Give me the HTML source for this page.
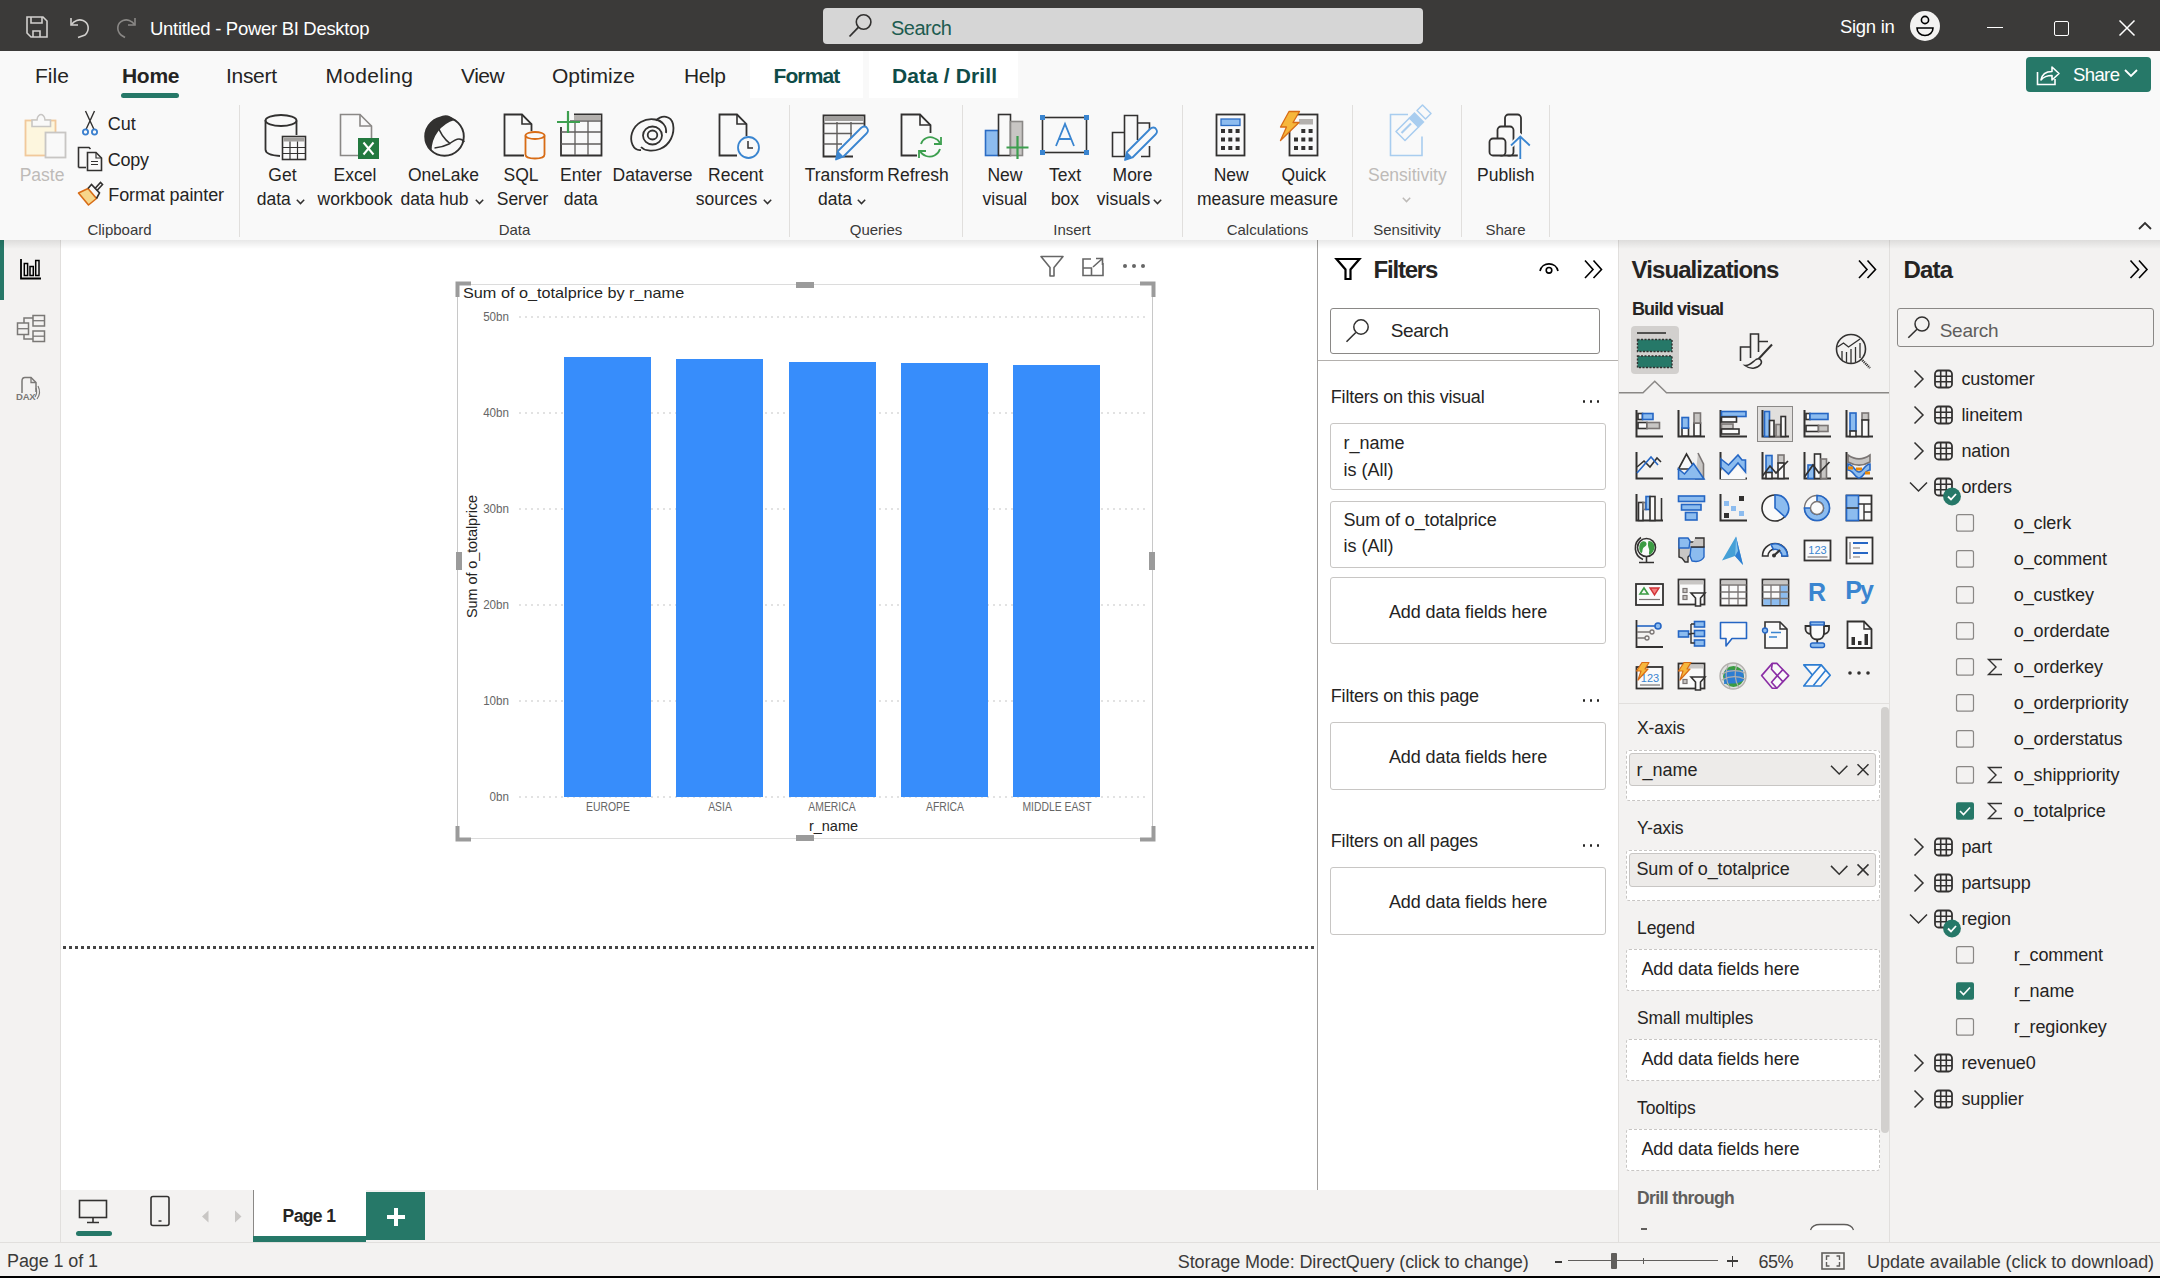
<!DOCTYPE html>
<html><head><meta charset="utf-8">
<style>
*{box-sizing:border-box;margin:0;padding:0}
html,body{width:2160px;height:1278px;overflow:hidden;background:#fff;font-family:"Liberation Sans",sans-serif;color:#252423}
.a{position:absolute;white-space:nowrap}
svg{position:absolute;overflow:visible}
</style></head><body>
<div class="a" style="left:0px;top:0px;width:2160px;height:51px;background:#3b3a39"></div>
<div class="a" style="left:0px;top:51px;width:2160px;height:189px;background:#f9f9f9"></div>
<div class="a" style="left:0px;top:240px;width:61px;height:1002px;background:#f3f2f1"></div>
<div class="a" style="left:60px;top:240px;width:1px;height:1002px;background:#e1dfdd"></div>
<div class="a" style="left:0px;top:240px;width:4px;height:60px;background:#267868"></div>
<div class="a" style="left:61px;top:240px;width:1256px;height:950px;background:#fff"></div>
<div class="a" style="left:61px;top:1190px;width:1557px;height:52px;background:#f3f2f1"></div>
<div class="a" style="left:0px;top:1242px;width:2160px;height:36px;background:#f3f2f1"></div>
<div class="a" style="left:0px;top:1242px;width:2160px;height:1px;background:#e1dfdd"></div>
<div class="a" style="left:0px;top:1276px;width:2160px;height:2px;background:#000"></div>
<div class="a" style="left:1317px;top:240px;width:1px;height:950px;background:#a19f9d"></div>
<div class="a" style="left:1318px;top:240px;width:300px;height:950px;background:#fff"></div>
<div class="a" style="left:1618px;top:240px;width:1px;height:1002px;background:#e1dfdd"></div>
<div class="a" style="left:1619px;top:240px;width:270px;height:1002px;background:#f3f2f1"></div>
<div class="a" style="left:1889px;top:240px;width:1px;height:1002px;background:#e1dfdd"></div>
<div class="a" style="left:1890px;top:240px;width:270px;height:1002px;background:#f3f2f1"></div>
<div class="a" style="left:0px;top:240px;width:2160px;height:9px;background:linear-gradient(rgba(0,0,0,0.09),rgba(0,0,0,0))"></div>
<svg style="left:26px;top:16px;" width="22" height="22" viewBox="0 0 22 22"><path d="M1 1H17L21 5V21H5L1 17Z" fill="none" stroke="#d2d0ce" stroke-width="1.6"/><path d="M5 1V7H16V1" fill="none" stroke="#d2d0ce" stroke-width="1.6"/><path d="M7 21V15H14V21" fill="none" stroke="#d2d0ce" stroke-width="1.6"/></svg>
<svg style="left:70px;top:16px;" width="22" height="22" viewBox="0 0 22 22"><path d="M1 2V9H8" fill="none" stroke="#d2d0ce" stroke-width="1.6"/><path d="M1.5 8.5C4 4.5 9 3 13 4.5C19 7 20 14 15 19L8 21.5" fill="none" stroke="#d2d0ce" stroke-width="1.6"/></svg>
<svg style="left:114px;top:16px;" width="22" height="22" viewBox="0 0 22 22"><path d="M21 2V9H14" fill="none" stroke="#8a8886" stroke-width="1.6"/><path d="M20.5 8.5C18 4.5 13 3 9 4.5C3 7 2 14 7 19L11 21.5" fill="none" stroke="#8a8886" stroke-width="1.6"/></svg>
<div class="a" style="top:20.14px;font-size:18.5px;line-height:18.5px;color:#ffffff;letter-spacing:-0.3px;left:150px;">Untitled - Power BI Desktop</div>
<div class="a" style="left:823px;top:8px;width:600px;height:35.5px;background:#d6d6d6;border-radius:4px"></div>
<svg style="left:839px;top:14px;" width="30" height="26" viewBox="0 0 30 26"><circle cx="24.6" cy="8" r="7.3" fill="none" stroke="#323130" stroke-width="1.6"/><path d="M19.3 13.3L10.5 22.5" stroke="#323130" stroke-width="1.8"/></svg>
<div class="a" style="top:18.27px;font-size:20px;line-height:20px;color:#1e5c50;letter-spacing:-0.5px;left:891px;">Search</div>
<div class="a" style="top:17.74px;font-size:18.5px;line-height:18.5px;color:#ffffff;letter-spacing:-0.3px;left:1840px;">Sign in</div>
<svg style="left:1910px;top:11px;" width="30" height="30" viewBox="0 0 30 30"><circle cx="15" cy="15" r="15" fill="#f3f2f1"/><circle cx="15" cy="9" r="3.6" fill="none" stroke="#000" stroke-width="1.6"/><path d="M7 17H23C23 21.5 19.5 24.5 15 24.5C10.5 24.5 7 21.5 7 17Z" fill="none" stroke="#000" stroke-width="1.6"/></svg>
<div class="a" style="left:1987px;top:26.5px;width:16px;height:1.5px;background:#fff"></div>
<div class="a" style="left:2053.5px;top:20.5px;width:15px;height:15px;border:1.5px solid #fff;border-radius:2px"></div>
<svg style="left:2119px;top:20px;" width="16" height="16" viewBox="0 0 16 16"><path d="M0.5 0.5L15.5 15.5M15.5 0.5L0.5 15.5" stroke="#fff" stroke-width="1.5"/></svg>
<div class="a" style="top:65.32px;font-size:21px;line-height:21px;color:#252423;left:35px;">File</div>
<div class="a" style="top:65.32px;font-size:21px;line-height:21px;color:#252423;font-weight:700;letter-spacing:-0.3px;left:122px;">Home</div>
<div class="a" style="left:121px;top:93px;width:58px;height:5px;background:#267868;border-radius:2.5px"></div>
<div class="a" style="top:65.32px;font-size:21px;line-height:21px;color:#252423;letter-spacing:-0.3px;left:226px;">Insert</div>
<div class="a" style="top:65.32px;font-size:21px;line-height:21px;color:#252423;letter-spacing:0.3px;left:325.5px;">Modeling</div>
<div class="a" style="top:65.32px;font-size:21px;line-height:21px;color:#252423;letter-spacing:-0.5px;left:461px;">View</div>
<div class="a" style="top:65.32px;font-size:21px;line-height:21px;color:#252423;left:552px;">Optimize</div>
<div class="a" style="top:65.32px;font-size:21px;line-height:21px;color:#252423;letter-spacing:-0.4px;left:684px;">Help</div>
<div class="a" style="left:750px;top:51px;width:113px;height:47px;background:#fff"></div>
<div class="a" style="left:869px;top:51px;width:149px;height:47px;background:#fff"></div>
<div class="a" style="top:65.32px;font-size:21px;line-height:21px;color:#0f4c48;font-weight:700;letter-spacing:-0.9px;left:773.5px;">Format</div>
<div class="a" style="top:65.32px;font-size:21px;line-height:21px;color:#0f4c48;font-weight:700;letter-spacing:0.1px;left:892px;">Data / Drill</div>
<div class="a" style="left:2026px;top:57px;width:125px;height:35px;background:#267868;border-radius:4px"></div>
<svg style="left:2036px;top:63px;" width="26" height="23" viewBox="0 0 26 23"><path d="M1.5 9V21.5H19V16" fill="none" stroke="#fff" stroke-width="1.6"/><path d="M5 17C6 11 10 8.5 16 8.5V4L23 10.5L16 17V12.5C11 12.5 7.5 14 5 17Z" fill="none" stroke="#fff" stroke-width="1.6" stroke-linejoin="round"/></svg>
<div class="a" style="top:66.34px;font-size:18.5px;line-height:18.5px;color:#fff;letter-spacing:-0.6px;left:2073px;">Share</div>
<svg style="left:2124px;top:69px;" width="14" height="9" viewBox="0 0 14 9"><path d="M1 1L7 7L13 1" fill="none" stroke="#fff" stroke-width="1.8"/></svg>
<div class="a" style="left:239px;top:105px;width:1px;height:132px;background:#e1dfdd"></div>
<div class="a" style="left:789px;top:105px;width:1px;height:132px;background:#e1dfdd"></div>
<div class="a" style="left:962px;top:105px;width:1px;height:132px;background:#e1dfdd"></div>
<div class="a" style="left:1182px;top:105px;width:1px;height:132px;background:#e1dfdd"></div>
<div class="a" style="left:1352px;top:105px;width:1px;height:132px;background:#e1dfdd"></div>
<div class="a" style="left:1461px;top:105px;width:1px;height:132px;background:#e1dfdd"></div>
<div class="a" style="left:1549px;top:105px;width:1px;height:132px;background:#e1dfdd"></div>
<div class="a" style="top:166.99px;font-size:17.5px;line-height:17.5px;color:#bebbb8;left:-58.00px;width:200px;text-align:center;">Paste</div>
<div class="a" style="top:114.76px;font-size:18px;line-height:18px;color:#252423;left:107.8px;">Cut</div>
<div class="a" style="top:150.76px;font-size:18px;line-height:18px;color:#252423;letter-spacing:-0.3px;left:107.8px;">Copy</div>
<div class="a" style="top:186.46px;font-size:18px;line-height:18px;color:#252423;letter-spacing:-0.1px;left:108.3px;">Format painter</div>
<div class="a" style="top:221.80px;font-size:15px;line-height:15px;color:#3b3a39;left:19.50px;width:200px;text-align:center;">Clipboard</div>
<div class="a" style="top:166.99px;font-size:17.5px;line-height:17.5px;color:#252423;left:182.40px;width:200px;text-align:center;">Get</div>
<div class="a" style="top:190.79px;font-size:17.5px;line-height:17.5px;color:#252423;left:173.75px;width:200px;text-align:center;">data</div>
<svg style="left:295.5px;top:198.5px;" width="9" height="6" viewBox="0 0 9 6"><path d="M0.8 0.8L4.5 4.6L8.2 0.8" fill="none" stroke="#323130" stroke-width="1.5"/></svg>
<div class="a" style="top:166.99px;font-size:17.5px;line-height:17.5px;color:#252423;left:255.00px;width:200px;text-align:center;">Excel</div>
<div class="a" style="top:190.79px;font-size:17.5px;line-height:17.5px;color:#252423;left:255.00px;width:200px;text-align:center;">workbook</div>
<div class="a" style="top:166.99px;font-size:17.5px;line-height:17.5px;color:#252423;left:343.50px;width:200px;text-align:center;">OneLake</div>
<div class="a" style="top:190.79px;font-size:17.5px;line-height:17.5px;color:#252423;left:334.50px;width:200px;text-align:center;">data hub</div>
<svg style="left:475px;top:198.5px;" width="9" height="6" viewBox="0 0 9 6"><path d="M0.8 0.8L4.5 4.6L8.2 0.8" fill="none" stroke="#323130" stroke-width="1.5"/></svg>
<div class="a" style="top:166.99px;font-size:17.5px;line-height:17.5px;color:#252423;left:421.00px;width:200px;text-align:center;">SQL</div>
<div class="a" style="top:190.79px;font-size:17.5px;line-height:17.5px;color:#252423;left:422.50px;width:200px;text-align:center;">Server</div>
<div class="a" style="top:166.99px;font-size:17.5px;line-height:17.5px;color:#252423;left:481.00px;width:200px;text-align:center;">Enter</div>
<div class="a" style="top:190.79px;font-size:17.5px;line-height:17.5px;color:#252423;left:480.75px;width:200px;text-align:center;">data</div>
<div class="a" style="top:166.99px;font-size:17.5px;line-height:17.5px;color:#252423;left:552.50px;width:200px;text-align:center;">Dataverse</div>
<div class="a" style="top:166.99px;font-size:17.5px;line-height:17.5px;color:#252423;left:635.75px;width:200px;text-align:center;">Recent</div>
<div class="a" style="top:190.79px;font-size:17.5px;line-height:17.5px;color:#252423;left:626.50px;width:200px;text-align:center;">sources</div>
<svg style="left:762.5px;top:198.5px;" width="9" height="6" viewBox="0 0 9 6"><path d="M0.8 0.8L4.5 4.6L8.2 0.8" fill="none" stroke="#323130" stroke-width="1.5"/></svg>
<div class="a" style="top:221.80px;font-size:15px;line-height:15px;color:#3b3a39;left:414.50px;width:200px;text-align:center;">Data</div>
<div class="a" style="top:166.99px;font-size:17.5px;line-height:17.5px;color:#252423;left:744.20px;width:200px;text-align:center;">Transform</div>
<div class="a" style="top:190.79px;font-size:17.5px;line-height:17.5px;color:#252423;left:735.00px;width:200px;text-align:center;">data</div>
<svg style="left:857px;top:199px;" width="9" height="6" viewBox="0 0 9 6"><path d="M0.8 0.8L4.5 4.6L8.2 0.8" fill="none" stroke="#323130" stroke-width="1.5"/></svg>
<div class="a" style="top:166.99px;font-size:17.5px;line-height:17.5px;color:#252423;left:818.00px;width:200px;text-align:center;">Refresh</div>
<div class="a" style="top:221.80px;font-size:15px;line-height:15px;color:#3b3a39;left:776.00px;width:200px;text-align:center;">Queries</div>
<div class="a" style="top:166.99px;font-size:17.5px;line-height:17.5px;color:#252423;left:905.00px;width:200px;text-align:center;">New</div>
<div class="a" style="top:190.79px;font-size:17.5px;line-height:17.5px;color:#252423;left:904.90px;width:200px;text-align:center;">visual</div>
<div class="a" style="top:166.99px;font-size:17.5px;line-height:17.5px;color:#252423;left:965.00px;width:200px;text-align:center;">Text</div>
<div class="a" style="top:190.79px;font-size:17.5px;line-height:17.5px;color:#252423;left:965.00px;width:200px;text-align:center;">box</div>
<div class="a" style="top:166.99px;font-size:17.5px;line-height:17.5px;color:#252423;left:1032.50px;width:200px;text-align:center;">More</div>
<div class="a" style="top:190.79px;font-size:17.5px;line-height:17.5px;color:#252423;left:1023.50px;width:200px;text-align:center;">visuals</div>
<svg style="left:1153px;top:199px;" width="9" height="6" viewBox="0 0 9 6"><path d="M0.8 0.8L4.5 4.6L8.2 0.8" fill="none" stroke="#323130" stroke-width="1.5"/></svg>
<div class="a" style="top:221.80px;font-size:15px;line-height:15px;color:#3b3a39;left:972.00px;width:200px;text-align:center;">Insert</div>
<div class="a" style="top:166.99px;font-size:17.5px;line-height:17.5px;color:#252423;left:1131.25px;width:200px;text-align:center;">New</div>
<div class="a" style="top:190.79px;font-size:17.5px;line-height:17.5px;color:#252423;left:1131.00px;width:200px;text-align:center;">measure</div>
<div class="a" style="top:166.99px;font-size:17.5px;line-height:17.5px;color:#252423;left:1203.75px;width:200px;text-align:center;">Quick</div>
<div class="a" style="top:190.79px;font-size:17.5px;line-height:17.5px;color:#252423;left:1203.85px;width:200px;text-align:center;">measure</div>
<div class="a" style="top:221.80px;font-size:15px;line-height:15px;color:#3b3a39;left:1167.50px;width:200px;text-align:center;">Calculations</div>
<div class="a" style="top:166.99px;font-size:17.5px;line-height:17.5px;color:#bebbb8;left:1307.35px;width:200px;text-align:center;">Sensitivity</div>
<svg style="left:1402px;top:196.5px;" width="9" height="6" viewBox="0 0 9 6"><path d="M0.8 0.8L4.5 4.6L8.2 0.8" fill="none" stroke="#bebbb8" stroke-width="1.5"/></svg>
<div class="a" style="top:221.80px;font-size:15px;line-height:15px;color:#3b3a39;left:1307.00px;width:200px;text-align:center;">Sensitivity</div>
<div class="a" style="top:166.99px;font-size:17.5px;line-height:17.5px;color:#252423;left:1405.75px;width:200px;text-align:center;">Publish</div>
<div class="a" style="top:221.80px;font-size:15px;line-height:15px;color:#3b3a39;left:1405.50px;width:200px;text-align:center;">Share</div>
<svg style="left:2138px;top:221px;" width="14" height="9" viewBox="0 0 14 9"><path d="M1 8L7 2L13 8" fill="none" stroke="#323130" stroke-width="1.8"/></svg>
<svg style="left:0px;top:0px;" width="2160" height="1278" viewBox="0 0 2160 1278"><rect x="25.5" y="120.5" width="30" height="35" fill="#fdf6de" stroke="#f1c99b" stroke-width="1.8"/><path d="M32 126.5V120H37C37 116 40 114.5 41 114.5C42 114.5 45 116 45 120H50.5V126.5Z" fill="#f9f9f9" stroke="#c8c6c4" stroke-width="1.6"/><rect x="45.5" y="132.5" width="20" height="25" fill="#f9f9f9" stroke="#c8c6c4" stroke-width="1.8"/><path d="M85.5 111L94 129.5M94.5 111L86 129.5" stroke="#323130" stroke-width="1.4"/><circle cx="85.5" cy="132" r="2.6" fill="none" stroke="#3a7fcf" stroke-width="1.8"/><circle cx="94.5" cy="132" r="2.6" fill="none" stroke="#3a7fcf" stroke-width="1.8"/><path d="M78.5 167.5V147.5H89L90.5 149" fill="none" stroke="#323130" stroke-width="1.6"/><path d="M78.5 167.5H86" stroke="#323130" stroke-width="1.6"/><path d="M87.5 152.5H96L101.5 158V170.5H87.5Z" fill="none" stroke="#323130" stroke-width="1.6"/><path d="M96 152.5V158H101.5M91 161.5H98M91 164.5H98" fill="none" stroke="#323130" stroke-width="1.2"/><path d="M78.5 193L88 188.5L96.5 198.5L88.5 205Z" fill="#f7d68a" stroke="#d86c16" stroke-width="1.6" stroke-linejoin="round"/><path d="M88 188.5L91.5 184.5L99.5 193L96.5 198.5" fill="none" stroke="#323130" stroke-width="1.6"/><path d="M95 188.5L100.5 182.5L102.5 184.5L97 190.5" fill="none" stroke="#323130" stroke-width="1.6"/><path d="M265.5 120V149.5C265.5 153 271 155.5 280 156" fill="none" stroke="#323130" stroke-width="1.8"/><ellipse cx="281" cy="120.5" rx="15.5" ry="5.5" fill="none" stroke="#323130" stroke-width="1.8"/><path d="M296.5 120.5V135" stroke="#323130" stroke-width="1.8"/><rect x="282.5" y="136.5" width="23" height="23" fill="#f9f9f9" stroke="#323130" stroke-width="1.6"/><rect x="283.5" y="137.5" width="21" height="4" fill="#a19f9d"/><path d="M290 141.5V159M297.5 141.5V159M283 147.5H305M283 153.5H305" stroke="#323130" stroke-width="1.2"/><path d="M358 155.5H340.5V114.5H360L371.5 126V138" fill="none" stroke="#8a8886" stroke-width="1.6"/><path d="M360 114.5V126H371.5" fill="none" stroke="#8a8886" stroke-width="1.6"/><rect x="358" y="138" width="21" height="21" fill="#22793f"/><path d="M363.5 142.5L373.5 154.5M373.5 142.5L363.5 154.5" stroke="#fff" stroke-width="2"/><circle cx="444.5" cy="136.5" r="19.3" fill="none" stroke="#323130" stroke-width="1.9"/><path d="M431.6 150.8A19.3 19.3 0 0 1 454.7 120.1A32 32 0 0 0 431.6 150.8Z" fill="#323130"/><path d="M440 117.5C443 114 450 114 454.7 120.1L447 119Z" fill="#323130"/><path d="M437.5 124.5C439.5 132 444 139 450.5 144M434.5 148C440 147.5 445 146 449 144C453 141 456 139 459 139C461.5 139 463 140 464.3 142" fill="none" stroke="#323130" stroke-width="1.5"/><path d="M641 150C633 151 629.5 141 632 133C635 123 645 118 655 119.5C662 120.5 667 126 666 133" fill="none" stroke="#323130" stroke-width="1.8"/><path d="M656 120.5C662 114.5 671 115.5 673 124C675 134 670 145 660 149C652 152 644 150.5 641 147" fill="none" stroke="#323130" stroke-width="1.8"/><ellipse cx="652.5" cy="135.5" rx="9.5" ry="9" fill="none" stroke="#323130" stroke-width="1.8"/><ellipse cx="652.5" cy="135" rx="4.8" ry="4.5" fill="none" stroke="#323130" stroke-width="1.8"/><path d="M524 155.5H504.5V114.5H522L531.5 124V131" fill="none" stroke="#323130" stroke-width="1.8"/><path d="M522 114.5V124H531.5" fill="none" stroke="#323130" stroke-width="1.6"/><path d="M525.5 135.5V154.5C525.5 157 529.5 158.5 535 158.5C540.5 158.5 544.5 157 544.5 154.5V135.5" fill="#f9f9f9" stroke="#d86c16" stroke-width="1.8"/><ellipse cx="535" cy="135.5" rx="9.5" ry="3.5" fill="#f9f9f9" stroke="#d86c16" stroke-width="1.8"/><path d="M561 127V155.5H601.5V114.5H574" fill="none" stroke="#323130" stroke-width="1.8"/><rect x="574" y="115" width="27" height="5" fill="#b3b0ad"/><path d="M570 121H601M561 132H601M561 144H601M575 121V155M588 121V155" stroke="#605e5c" stroke-width="1.3"/><path d="M568 111V133M557 122H580" stroke="#3d9f4f" stroke-width="2.2"/><path d="M737 155.5H719.5V114.5H737L746.5 124V136" fill="none" stroke="#323130" stroke-width="1.8"/><path d="M737 114.5V124H746.5" fill="none" stroke="#323130" stroke-width="1.6"/><circle cx="748.5" cy="147.5" r="10.5" fill="#f9f9f9" stroke="#3a85d0" stroke-width="1.8"/><path d="M748 141V148H753" fill="none" stroke="#323130" stroke-width="1.5"/><path d="M853 156.5H823.5V115.5H864.5V129" fill="none" stroke="#323130" stroke-width="1.8"/><rect x="824.5" y="116" width="39" height="5" fill="#a19f9d"/><path d="M823.5 123.5H864M823.5 133.5H852M823.5 144H842M837 122V156M851 122V139" stroke="#605e5c" stroke-width="1.4"/><path d="M836 159.5L838 151L861 128C863 126 866 126 867 128C868.5 130 868 132 866.5 133.5L843.5 156.5Z" fill="#f9f9f9" stroke="#3a85d0" stroke-width="1.8" stroke-linejoin="round"/><path d="M836 159.5L838 151L843.5 156.5Z" fill="#3a85d0"/><path d="M917 155.5H901.5V114.5H920L930.5 125V133" fill="none" stroke="#323130" stroke-width="1.8"/><path d="M920 114.5V125H930.5" fill="none" stroke="#323130" stroke-width="1.6"/><path d="M921 144C923 138 929 136 934 138C937 139 939 141 940 143M940 149C938 155 932 158 926 156C923 155 921 153 920 151" fill="none" stroke="#3d9f4f" stroke-width="1.8"/><path d="M941 137V144H934M919 158V151H926" fill="none" stroke="#3d9f4f" stroke-width="1.8"/><rect x="985.5" y="130.5" width="13" height="25" fill="#8dbcef" stroke="#2b6cc4" stroke-width="1.6"/><rect x="998.5" y="114.5" width="12" height="41" fill="#f9f9f9" stroke="#323130" stroke-width="1.6"/><rect x="1010.5" y="121.5" width="12" height="34" fill="#c8c6c4" stroke="#8a8886" stroke-width="1.6"/><path d="M1017.5 136V159M1006.5 147.5H1028.5" stroke="#3d9f4f" stroke-width="2.2"/><rect x="1042.5" y="117.5" width="44" height="35" fill="none" stroke="#323130" stroke-width="1.6"/><rect x="1040.0" y="115.0" width="5" height="5" fill="#3a85d0"/><rect x="1084.0" y="115.0" width="5" height="5" fill="#3a85d0"/><rect x="1040.0" y="150.0" width="5" height="5" fill="#3a85d0"/><rect x="1084.0" y="150.0" width="5" height="5" fill="#3a85d0"/><path d="M1056 146L1065 124L1074 146M1059 139H1071" fill="none" stroke="#3a85d0" stroke-width="1.8"/><path d="M1125 156.5H1112.5V132.5H1124.5V156.5M1124.5 132.5V115.5H1137.5V140M1137.5 123H1149.5V131M1141 156.5H1149.5V146" fill="none" stroke="#323130" stroke-width="1.6"/><path d="M1125 160L1127 152L1150 129C1152 127 1155 127 1156 129C1157.5 131 1157 133 1155.5 134.5L1132.5 157.5Z" fill="#f9f9f9" stroke="#3a85d0" stroke-width="1.8" stroke-linejoin="round"/><path d="M1125 160L1127 152L1132.5 157.5Z" fill="#3a85d0"/><rect x="1216.5" y="114.5" width="28" height="41" fill="#f9f9f9" stroke="#323130" stroke-width="1.8"/><rect x="1221" y="119" width="19" height="6.5" fill="#8dbcef" stroke="#2b6cc4" stroke-width="1.3"/><rect x="1221.0" y="129.0" width="4" height="4" fill="#323130"/><rect x="1228.3" y="129.0" width="4" height="4" fill="#323130"/><rect x="1235.6" y="129.0" width="4" height="4" fill="#323130"/><rect x="1221.0" y="137.5" width="4" height="4" fill="#323130"/><rect x="1228.3" y="137.5" width="4" height="4" fill="#323130"/><rect x="1235.6" y="137.5" width="4" height="4" fill="#323130"/><rect x="1221.0" y="146.0" width="4" height="4" fill="#323130"/><rect x="1228.3" y="146.0" width="4" height="4" fill="#323130"/><rect x="1235.6" y="146.0" width="4" height="4" fill="#323130"/><rect x="1289.5" y="114.5" width="28" height="41" fill="#f9f9f9" stroke="#323130" stroke-width="1.8"/><rect x="1299" y="119" width="14" height="5.5" fill="#b3b0ad"/><rect x="1301.3" y="129.0" width="4" height="4" fill="#323130"/><rect x="1308.6" y="129.0" width="4" height="4" fill="#323130"/><rect x="1294.0" y="137.5" width="4" height="4" fill="#323130"/><rect x="1301.3" y="137.5" width="4" height="4" fill="#323130"/><rect x="1308.6" y="137.5" width="4" height="4" fill="#323130"/><rect x="1294.0" y="146.0" width="4" height="4" fill="#323130"/><rect x="1301.3" y="146.0" width="4" height="4" fill="#323130"/><rect x="1308.6" y="146.0" width="4" height="4" fill="#323130"/><path d="M1289 111.5H1299.5L1293 122.5H1299L1280.5 140.5L1286.5 127H1280.5Z" fill="#f6b73c" stroke="#d86c16" stroke-width="1.3" stroke-linejoin="round"/><path d="M1408 114.5H1390.5V155.5H1422V136.5" fill="none" stroke="#a9cdef" stroke-width="1.6"/><path d="M1396 131.5L1409.5 118L1418.5 127L1405 140.5Z" fill="#f9f9f9" stroke="#a9cdef" stroke-width="1.6" stroke-linejoin="round"/><path d="M1401.5 133L1411 123.5" stroke="#a9cdef" stroke-width="2.2"/><path d="M1408.5 118L1414.5 112L1424.5 122L1418.5 128Z" fill="#a9cdef"/><path d="M1417 110.5L1422.5 105L1431 113.5L1425.5 119Z" fill="#f9f9f9" stroke="#a9cdef" stroke-width="1.5" stroke-linejoin="round"/><rect x="1505" y="114.5" width="16" height="41" rx="3.5" fill="#f9f9f9" stroke="#323130" stroke-width="1.8"/><rect x="1497.5" y="126.5" width="16" height="29" rx="3.5" fill="#f9f9f9" stroke="#323130" stroke-width="1.8"/><rect x="1489.5" y="138.5" width="16" height="17" rx="3.5" fill="#f9f9f9" stroke="#323130" stroke-width="1.8"/><path d="M1520.3 159V137M1511 145.5L1520.3 136.5L1529.8 145.5" fill="none" stroke="#f9f9f9" stroke-width="5"/><path d="M1520.3 159V136M1511 145.5L1520.3 136.5L1529.8 145.5" fill="none" stroke="#3a85d0" stroke-width="1.8"/></svg>
<svg style="left:0px;top:0px;" width="2160" height="1278" viewBox="0 0 2160 1278"><path d="M21 259V278.5H41" fill="none" stroke="#000" stroke-width="1.8"/><rect x="24.3" y="263.5" width="3.3" height="12" fill="none" stroke="#000" stroke-width="1.5"/><rect x="30" y="266.5" width="3.3" height="9" fill="none" stroke="#000" stroke-width="1.5"/><rect x="35.7" y="260.5" width="3.3" height="15" fill="none" stroke="#000" stroke-width="1.5"/><rect x="17.5" y="323" width="11" height="11.5" fill="none" stroke="#7a7876" stroke-width="1.5"/><path d="M17.5 328.7H28.5" stroke="#7a7876" stroke-width="1.3"/><rect x="33" y="315.5" width="11.5" height="10.5" fill="none" stroke="#7a7876" stroke-width="1.5"/><path d="M33 320.7H44.5" stroke="#7a7876" stroke-width="1.3"/><rect x="33" y="331" width="11.5" height="10.5" fill="none" stroke="#7a7876" stroke-width="1.5"/><path d="M33 336.2H44.5" stroke="#7a7876" stroke-width="1.3"/><path d="M24 323V318H33M24 334.5V339H33" fill="none" stroke="#7a7876" stroke-width="1.5"/><path d="M22 393V381C22 379 23 377.5 25 377.5H31L36 382.5V392" fill="none" stroke="#7a7876" stroke-width="1.5"/><path d="M31 377.5V382.5H36" fill="none" stroke="#7a7876" stroke-width="1.3"/><path d="M38 386C40 390 40 395 37 399M36 388C37 391 37 394 35 397" fill="none" stroke="#7a7876" stroke-width="1.2"/></svg>
<div class="a" style="top:392.46px;font-size:9.5px;line-height:9.5px;color:#7a7876;font-weight:700;letter-spacing:-0.2px;left:16px;">DAX</div>
<div class="a" style="left:63px;top:946px;width:1252px;height:3px;background-image:linear-gradient(90deg,#444 3px,transparent 3px);background-size:6px 3px"></div>
<div class="a" style="left:457px;top:284px;width:696px;height:555px;border:1.5px solid #dcdcdc"></div>
<div class="a" style="left:457px;top:284px;width:1.3px;height:555px;background:#c8c8c8"></div>
<div class="a" style="left:1151.7px;top:284px;width:1.3px;height:555px;background:#c8c8c8"></div>
<svg style="left:0px;top:0px;" width="2160" height="1278" viewBox="0 0 2160 1278"><path transform="translate(456,282)" d="M1.5 15V1.5H15" fill="none" stroke="#9b9b9b" stroke-width="4"/><path transform="translate(1140,282)" d="M0 1.5H13.5V15" fill="none" stroke="#9b9b9b" stroke-width="4"/><path transform="translate(456,826)" d="M1.5 0V13.5H15" fill="none" stroke="#9b9b9b" stroke-width="4"/><path transform="translate(1140,826)" d="M0 13.5H13.5V0" fill="none" stroke="#9b9b9b" stroke-width="4"/><rect x="796" y="282" width="18" height="6" fill="#9b9b9b"/><rect x="796" y="835" width="18" height="6" fill="#9b9b9b"/><rect x="456" y="552" width="6" height="18" fill="#9b9b9b"/><rect x="1149" y="552" width="6" height="18" fill="#9b9b9b"/></svg>
<svg style="left:0px;top:0px;" width="2160" height="1278" viewBox="0 0 2160 1278"><path d="M1041 256.5H1063L1054 267.5V276H1050V267.5Z" fill="none" stroke="#666" stroke-width="1.6" stroke-linejoin="round"/><path d="M1091 259H1083V275.5H1103V263M1083 268H1091.5V275.5M1093 267L1102.5 258.5M1096 258.5H1102.5V265" fill="none" stroke="#666" stroke-width="1.6"/><circle cx="1125" cy="266" r="2" fill="#666"/><circle cx="1134" cy="266" r="2" fill="#666"/><circle cx="1143" cy="266" r="2" fill="#666"/></svg>
<div class="a" style="top:286.48px;font-size:14.5px;line-height:14.5px;color:#252423;left:462.6px;transform:scaleX(1.12);transform-origin:left center;">Sum of o_totalprice by r_name</div>
<div class="a" style="top:310.62px;font-size:12.5px;line-height:12.5px;color:#666666;left:449.20px;width:60px;text-align:right;transform:scaleX(0.93);transform-origin:right center;">50bn</div>
<div class="a" style="left:519px;top:316px;width:626px;height:2px;background-image:linear-gradient(90deg,#e2e2e2 2px,transparent 2px);background-size:6px 2px"></div>
<div class="a" style="top:406.62px;font-size:12.5px;line-height:12.5px;color:#666666;left:449.20px;width:60px;text-align:right;transform:scaleX(0.93);transform-origin:right center;">40bn</div>
<div class="a" style="left:519px;top:412px;width:626px;height:2px;background-image:linear-gradient(90deg,#e2e2e2 2px,transparent 2px);background-size:6px 2px"></div>
<div class="a" style="top:502.62px;font-size:12.5px;line-height:12.5px;color:#666666;left:449.20px;width:60px;text-align:right;transform:scaleX(0.93);transform-origin:right center;">30bn</div>
<div class="a" style="left:519px;top:508px;width:626px;height:2px;background-image:linear-gradient(90deg,#e2e2e2 2px,transparent 2px);background-size:6px 2px"></div>
<div class="a" style="top:598.62px;font-size:12.5px;line-height:12.5px;color:#666666;left:449.20px;width:60px;text-align:right;transform:scaleX(0.93);transform-origin:right center;">20bn</div>
<div class="a" style="left:519px;top:604px;width:626px;height:2px;background-image:linear-gradient(90deg,#e2e2e2 2px,transparent 2px);background-size:6px 2px"></div>
<div class="a" style="top:694.62px;font-size:12.5px;line-height:12.5px;color:#666666;left:449.20px;width:60px;text-align:right;transform:scaleX(0.93);transform-origin:right center;">10bn</div>
<div class="a" style="left:519px;top:700px;width:626px;height:2px;background-image:linear-gradient(90deg,#e2e2e2 2px,transparent 2px);background-size:6px 2px"></div>
<div class="a" style="top:790.62px;font-size:12.5px;line-height:12.5px;color:#666666;left:449.20px;width:60px;text-align:right;transform:scaleX(0.93);transform-origin:right center;">0bn</div>
<div class="a" style="left:519px;top:796px;width:626px;height:2px;background-image:linear-gradient(90deg,#e2e2e2 2px,transparent 2px);background-size:6px 2px"></div>
<div class="a" style="left:564px;top:357px;width:87px;height:440px;background:#378dfb"></div>
<div class="a" style="left:676.2px;top:359px;width:87px;height:438px;background:#378dfb"></div>
<div class="a" style="left:788.6px;top:362px;width:87px;height:435px;background:#378dfb"></div>
<div class="a" style="left:901px;top:363px;width:87px;height:434px;background:#378dfb"></div>
<div class="a" style="left:1013.4px;top:365.4px;width:87px;height:431.6px;background:#378dfb"></div>
<div class="a" style="top:801.42px;font-size:12.5px;line-height:12.5px;color:#666666;left:527.50px;width:160px;text-align:center;transform:scaleX(0.83);transform-origin:center center;">EUROPE</div>
<div class="a" style="top:801.42px;font-size:12.5px;line-height:12.5px;color:#666666;left:639.70px;width:160px;text-align:center;transform:scaleX(0.83);transform-origin:center center;">ASIA</div>
<div class="a" style="top:801.42px;font-size:12.5px;line-height:12.5px;color:#666666;left:752.10px;width:160px;text-align:center;transform:scaleX(0.83);transform-origin:center center;">AMERICA</div>
<div class="a" style="top:801.42px;font-size:12.5px;line-height:12.5px;color:#666666;left:864.50px;width:160px;text-align:center;transform:scaleX(0.83);transform-origin:center center;">AFRICA</div>
<div class="a" style="top:801.42px;font-size:12.5px;line-height:12.5px;color:#666666;left:976.90px;width:160px;text-align:center;transform:scaleX(0.83);transform-origin:center center;">MIDDLE EAST</div>
<div class="a" style="top:818.73px;font-size:14.5px;line-height:14.5px;color:#252423;left:783.50px;width:100px;text-align:center;">r_name</div>
<div class="a" style="left:411.5px;top:549px;width:120px;height:18px;font-size:14.5px;line-height:18px;text-align:center;color:#252423;transform:rotate(-90deg);letter-spacing:-0.1px">Sum of o_totalprice</div>
<svg style="left:0px;top:0px;" width="2160" height="1278" viewBox="0 0 2160 1278"><rect x="79.5" y="1200.5" width="27" height="17" fill="none" stroke="#323130" stroke-width="1.6"/><path d="M93 1218V1222M87 1222.5H99" stroke="#323130" stroke-width="1.6"/><rect x="151" y="1196.5" width="18" height="29" rx="2" fill="none" stroke="#323130" stroke-width="1.6"/><path d="M158.5 1221H161.5" stroke="#323130" stroke-width="1.5"/><path d="M208.5 1210.5L202 1216.5L208.5 1222.5Z" fill="#c8c6c4"/><path d="M235 1210.5L241.5 1216.5L235 1222.5Z" fill="#c8c6c4"/></svg>
<div class="a" style="left:76px;top:1231px;width:36px;height:5px;background:#267868;border-radius:2.5px"></div>
<div class="a" style="left:252.6px;top:1190px;width:113px;height:52px;background:#fff;border-left:1px solid #8a8886"></div>
<div class="a" style="left:253px;top:1236px;width:113px;height:6px;background:#267868"></div>
<div class="a" style="top:1207.94px;font-size:17.5px;line-height:17.5px;color:#252423;font-weight:700;letter-spacing:-0.6px;left:249.00px;width:120px;text-align:center;">Page 1</div>
<div class="a" style="left:366px;top:1192px;width:59px;height:48px;background:#267868"></div>
<div class="a" style="left:394px;top:1208px;width:4px;height:17.5px;background:#fff"></div>
<div class="a" style="left:387px;top:1214.5px;width:18px;height:4px;background:#fff"></div>
<div class="a" style="top:1252.26px;font-size:18px;line-height:18px;color:#3b3a39;letter-spacing:-0.1px;left:7px;">Page 1 of 1</div>
<div class="a" style="top:1252.56px;font-size:18px;line-height:18px;color:#3b3a39;letter-spacing:-0.1px;left:1177.8px;">Storage Mode: DirectQuery (click to change)</div>
<div class="a" style="left:1555px;top:1260.5px;width:6.5px;height:2px;background:#3b3a39"></div>
<div class="a" style="left:1568px;top:1260px;width:150px;height:1.2px;background:#605e5c"></div>
<div class="a" style="left:1611px;top:1252.5px;width:6px;height:16px;background:#605e5c;border-radius:1px"></div>
<div class="a" style="left:1642.5px;top:1257.5px;width:1.2px;height:6px;background:#605e5c"></div>
<div class="a" style="left:1727px;top:1260.3px;width:11px;height:1.8px;background:#3b3a39"></div>
<div class="a" style="left:1731.6px;top:1255.7px;width:1.8px;height:11px;background:#3b3a39"></div>
<div class="a" style="top:1252.56px;font-size:18px;line-height:18px;color:#3b3a39;letter-spacing:-0.5px;left:1758.5px;">65%</div>
<svg style="left:0px;top:0px;" width="2160" height="1278" viewBox="0 0 2160 1278"><rect x="1822" y="1253" width="22" height="16" fill="none" stroke="#605e5c" stroke-width="1.6"/><path d="M1826.5 1260V1256H1829.5M1836.5 1256H1839.5V1260M1826.5 1262V1266H1829.5M1836.5 1266H1839.5V1262" fill="none" stroke="#605e5c" stroke-width="1.4"/></svg>
<div class="a" style="top:1252.56px;font-size:18px;line-height:18px;color:#3b3a39;letter-spacing:-0.03px;left:1867px;">Update available (click to download)</div>
<svg style="left:0px;top:0px;" width="2160" height="1278" viewBox="0 0 2160 1278"><path d="M1336.5 259H1359.5L1350.5 269.5V279H1345.5V269.5Z" fill="none" stroke="#000" stroke-width="2.2" stroke-linejoin="miter"/><path d="M1540 271C1542 261.5 1556 261.5 1558 271" fill="none" stroke="#000" stroke-width="1.6"/><circle cx="1549" cy="270.3" r="2.8" fill="none" stroke="#000" stroke-width="1.6"/><path d="M1585 260.5L1593 269.5L1585 278M1593.5 260.5L1601.5 269.5L1593.5 278" fill="none" stroke="#000" stroke-width="1.6"/></svg>
<div class="a" style="top:257.98px;font-size:24px;line-height:24px;color:#252423;font-weight:700;letter-spacing:-1.2px;left:1373.5px;">Filters</div>
<div class="a" style="left:1330px;top:308px;width:270px;height:45.5px;border:1px solid #8a8886;border-radius:3px;background:#fff"></div>
<svg style="left:0px;top:0px;" width="2160" height="1278" viewBox="0 0 2160 1278"><circle cx="1361" cy="327" r="7.2" fill="none" stroke="#323130" stroke-width="1.5"/><path d="M1355.8 332.5L1346.5 341.8" stroke="#323130" stroke-width="1.6"/></svg>
<div class="a" style="top:320.62px;font-size:19px;line-height:19px;color:#252423;letter-spacing:-0.45px;left:1390.8px;">Search</div>
<div class="a" style="left:1318px;top:360px;width:300px;height:1.3px;background:#b3b0ad"></div>
<div class="a" style="top:388.36px;font-size:18px;line-height:18px;color:#252423;letter-spacing:-0.2px;left:1330.8px;">Filters on this visual</div>
<div class="a" style="left:1582.5px;top:400.3px;width:2.4px;height:2.4px;background:#252423;border-radius:50%"></div>
<div class="a" style="left:1589.5px;top:400.3px;width:2.4px;height:2.4px;background:#252423;border-radius:50%"></div>
<div class="a" style="left:1596.5px;top:400.3px;width:2.4px;height:2.4px;background:#252423;border-radius:50%"></div>
<div class="a" style="left:1330px;top:423px;width:276px;height:67px;border:1px solid #c8c6c4;border-radius:3px;background:#fff"></div>
<div class="a" style="top:433.76px;font-size:18px;line-height:18px;color:#252423;left:1343.4px;">r_name</div>
<div class="a" style="top:460.76px;font-size:18px;line-height:18px;color:#252423;left:1343.4px;">is (All)</div>
<div class="a" style="left:1330px;top:500.5px;width:276px;height:67px;border:1px solid #c8c6c4;border-radius:3px;background:#fff"></div>
<div class="a" style="top:510.56px;font-size:18px;line-height:18px;color:#252423;letter-spacing:-0.1px;left:1343.4px;">Sum of o_totalprice</div>
<div class="a" style="top:537.36px;font-size:18px;line-height:18px;color:#252423;left:1343.4px;">is (All)</div>
<div class="a" style="left:1330px;top:577px;width:276px;height:67px;border:1px solid #c8c6c4;border-radius:3px;background:#fff"></div>
<div class="a" style="top:602.56px;font-size:18px;line-height:18px;color:#252423;letter-spacing:-0.1px;left:1338.00px;width:260px;text-align:center;">Add data fields here</div>
<div class="a" style="top:687.26px;font-size:18px;line-height:18px;color:#252423;letter-spacing:-0.2px;left:1330.8px;">Filters on this page</div>
<div class="a" style="left:1582.5px;top:699.2px;width:2.4px;height:2.4px;background:#252423;border-radius:50%"></div>
<div class="a" style="left:1589.5px;top:699.2px;width:2.4px;height:2.4px;background:#252423;border-radius:50%"></div>
<div class="a" style="left:1596.5px;top:699.2px;width:2.4px;height:2.4px;background:#252423;border-radius:50%"></div>
<div class="a" style="left:1330px;top:722px;width:276px;height:67.5px;border:1px solid #c8c6c4;border-radius:3px;background:#fff"></div>
<div class="a" style="top:747.76px;font-size:18px;line-height:18px;color:#252423;letter-spacing:-0.1px;left:1338.00px;width:260px;text-align:center;">Add data fields here</div>
<div class="a" style="top:832.26px;font-size:18px;line-height:18px;color:#252423;letter-spacing:-0.2px;left:1330.8px;">Filters on all pages</div>
<div class="a" style="left:1582.5px;top:844.2px;width:2.4px;height:2.4px;background:#252423;border-radius:50%"></div>
<div class="a" style="left:1589.5px;top:844.2px;width:2.4px;height:2.4px;background:#252423;border-radius:50%"></div>
<div class="a" style="left:1596.5px;top:844.2px;width:2.4px;height:2.4px;background:#252423;border-radius:50%"></div>
<div class="a" style="left:1330px;top:867px;width:276px;height:67.5px;border:1px solid #c8c6c4;border-radius:3px;background:#fff"></div>
<div class="a" style="top:892.76px;font-size:18px;line-height:18px;color:#252423;letter-spacing:-0.1px;left:1338.00px;width:260px;text-align:center;">Add data fields here</div>
<div class="a" style="top:257.78px;font-size:24px;line-height:24px;color:#252423;font-weight:700;letter-spacing:-0.9px;left:1631.5px;">Visualizations</div>
<svg style="left:0px;top:0px;" width="2160" height="1278" viewBox="0 0 2160 1278"><path d="M1859 260.5L1867 269.5L1859 278M1867.5 260.5L1875.5 269.5L1867.5 278" fill="none" stroke="#000" stroke-width="1.6"/></svg>
<div class="a" style="top:299.76px;font-size:18px;line-height:18px;color:#252423;font-weight:700;letter-spacing:-0.8px;left:1631.9px;">Build visual</div>
<div class="a" style="left:1631px;top:326px;width:48px;height:47.5px;background:#d2d0ce;border-radius:4px"></div>
<svg style="left:0px;top:0px;" width="2160" height="1278" viewBox="0 0 2160 1278"><path d="M1637 333H1666" stroke="#323130" stroke-width="1.6"/><rect x="1637.5" y="339.5" width="34.5" height="12" fill="#267868" stroke="#323130" stroke-width="1.4" stroke-dasharray="2 1.5"/><rect x="1637.5" y="356" width="34.5" height="11.5" fill="#267868" stroke="#323130" stroke-width="1.4" stroke-dasharray="2 1.5"/><path d="M1740.5 361V347H1750.5M1750.5 358V334H1758.5V352M1758.5 341.5H1768" fill="none" stroke="#323130" stroke-width="1.6"/><path d="M1745 365.5C1750 366 1752.5 362 1756 359.5C1760 357.5 1763 361 1760.5 364.5C1757 369 1750 369.5 1745 365.5Z" fill="none" stroke="#323130" stroke-width="1.5"/><path d="M1758.5 359L1772 344.5" stroke="#323130" stroke-width="2"/><circle cx="1851" cy="349" r="14.5" fill="none" stroke="#323130" stroke-width="1.6"/><path d="M1837.5 347L1843.5 343L1848.5 347L1860 339" fill="none" stroke="#323130" stroke-width="1.4"/><path d="M1842 351V360M1846.5 352V362M1851 349V363M1855.5 347V362M1860 343V358" stroke="#323130" stroke-width="1.3"/><path d="M1861 359L1870 368" stroke="#323130" stroke-width="2.4" stroke-dasharray="1.2 0.8"/><path d="M1619 392.75H1643L1654.75 381.25L1666.5 392.75H1889" fill="none" stroke="#8a8886" stroke-width="1.5"/></svg>
<svg style="left:0px;top:0px;" width="2160" height="1278" viewBox="0 0 2160 1278"><rect x="1757.5" y="406.5" width="35" height="35" fill="#e1dfdd" stroke="#8a8886" stroke-width="1"/><g transform="translate(1635,410)"><path d="M1.5 0V26.5H28" fill="none" stroke="#323130" stroke-width="2"/><rect x="3" y="3.5" width="4.5" height="6" fill="#fafafa" stroke="#323130" stroke-width="1.6"/><rect x="7.5" y="3.5" width="10.5" height="6" fill="#8cbcef" stroke="#2566c4" stroke-width="1.6"/><rect x="3" y="12.5" width="9" height="6" fill="#fafafa" stroke="#323130" stroke-width="1.6"/><rect x="12" y="12.5" width="12.5" height="6" fill="#c8c6c4" stroke="#7a7574" stroke-width="1.6"/></g><g transform="translate(1677,410)"><path d="M1.5 0V26.5H28" fill="none" stroke="#323130" stroke-width="2"/><rect x="5" y="18" width="6.5" height="8" fill="#fafafa" stroke="#323130" stroke-width="1.6"/><rect x="5" y="7.5" width="6.5" height="10.5" fill="#8cbcef" stroke="#2566c4" stroke-width="1.6"/><rect x="17" y="13" width="6.5" height="13" fill="#fafafa" stroke="#323130" stroke-width="1.6"/><rect x="17" y="3" width="6.5" height="10" fill="#c8c6c4" stroke="#7a7574" stroke-width="1.6"/></g><g transform="translate(1719,410)"><path d="M1.5 0V26.5H28" fill="none" stroke="#323130" stroke-width="2"/><rect x="2.5" y="1.5" width="24.5" height="5" fill="#8cbcef" stroke="#2566c4" stroke-width="1.6"/><rect x="2.5" y="7" width="15" height="5" fill="#fafafa" stroke="#323130" stroke-width="1.6"/><rect x="2.5" y="14" width="11.5" height="5" fill="#c8c6c4" stroke="#7a7574" stroke-width="1.6"/><rect x="2.5" y="19" width="17.5" height="5" fill="#fafafa" stroke="#323130" stroke-width="1.6"/></g><g transform="translate(1761,410)"><path d="M1.5 0V26.5H28" fill="none" stroke="#323130" stroke-width="2"/><rect x="3.5" y="1.5" width="5" height="25" fill="#8cbcef" stroke="#2566c4" stroke-width="1.6"/><rect x="8.5" y="10.5" width="4.5" height="16" fill="#fafafa" stroke="#323130" stroke-width="1.6"/><rect x="15" y="14.5" width="4.5" height="12" fill="#c8c6c4" stroke="#7a7574" stroke-width="1.6"/><rect x="20" y="6.5" width="4.5" height="20" fill="#fafafa" stroke="#323130" stroke-width="1.6"/></g><g transform="translate(1803,410)"><path d="M1.5 0V26.5H28" fill="none" stroke="#323130" stroke-width="2"/><rect x="3" y="3.5" width="4" height="6" fill="#fafafa" stroke="#323130" stroke-width="1.6"/><rect x="7" y="3.5" width="18" height="6" fill="#8cbcef" stroke="#2566c4" stroke-width="1.6"/><rect x="3" y="15.5" width="12.5" height="6" fill="#fafafa" stroke="#323130" stroke-width="1.6"/><rect x="15.5" y="15.5" width="9.5" height="6" fill="#c8c6c4" stroke="#7a7574" stroke-width="1.6"/></g><g transform="translate(1845,410)"><path d="M1.5 0V26.5H28" fill="none" stroke="#323130" stroke-width="2"/><rect x="5" y="3" width="6" height="18" fill="#8cbcef" stroke="#2566c4" stroke-width="1.6"/><rect x="5" y="21" width="6" height="5.5" fill="#fafafa" stroke="#323130" stroke-width="1.6"/><rect x="17" y="3" width="6.5" height="7" fill="#c8c6c4" stroke="#7a7574" stroke-width="1.6"/><rect x="17" y="10" width="6.5" height="16.5" fill="#fafafa" stroke="#323130" stroke-width="1.6"/></g><g transform="translate(1635,452)"><path d="M1.5 0V26.5H28" fill="none" stroke="#323130" stroke-width="2"/><path d="M2 15L9 9L15 15L22 6L26 10" fill="none" stroke="#323130" stroke-width="1.6"/><path d="M2 21L16 5L23 13" fill="none" stroke="#2566c4" stroke-width="1.6"/></g><g transform="translate(1677,452)"><path d="M1.5 17L9.5 2L18 17Z" fill="#fafafa" stroke="#323130" stroke-width="1.6"/><path d="M21 1L26.5 12V27H18" fill="#c8c6c4" stroke="#7a7574" stroke-width="1.6"/><path d="M1.5 27V17L7.5 22L16.5 11.5L27 27Z" fill="#8cbcef" stroke="#2566c4" stroke-width="1.6"/></g><g transform="translate(1719,452)"><path d="M1.5 0V26.5H28" fill="none" stroke="#323130" stroke-width="2"/><path d="M2 27V18L9.5 24L19 14L26.5 24V27Z" fill="#fafafa"/><path d="M2 7L9.5 13L19 3L23 8H26.5V20L19 11L9.5 22L2 15Z" fill="#8cbcef" stroke="#2566c4" stroke-width="1.6"/></g><g transform="translate(1761,452)"><path d="M1.5 0V26.5H28" fill="none" stroke="#323130" stroke-width="2"/><rect x="5" y="3.5" width="6" height="17" fill="#8cbcef" stroke="#2566c4" stroke-width="1.6"/><rect x="5" y="20.5" width="6" height="6" fill="#fafafa" stroke="#323130" stroke-width="1.6"/><rect x="17" y="3" width="6" height="8" fill="#c8c6c4" stroke="#7a7574" stroke-width="1.6"/><rect x="17" y="11" width="6" height="15.5" fill="#fafafa" stroke="#323130" stroke-width="1.6"/><path d="M1.5 24L9 14L15 21L27 9" fill="none" stroke="#323130" stroke-width="1.7"/></g><g transform="translate(1803,452)"><path d="M1.5 0V26.5H28" fill="none" stroke="#323130" stroke-width="2"/><rect x="5" y="13" width="6" height="13.5" fill="#8cbcef" stroke="#2566c4" stroke-width="1.6"/><rect x="11.5" y="2" width="6" height="24.5" fill="#fafafa" stroke="#323130" stroke-width="1.6"/><rect x="18" y="7" width="5.5" height="19.5" fill="#c8c6c4" stroke="#7a7574" stroke-width="1.6"/><path d="M1.5 25L10 13L16 21L26.5 10" fill="none" stroke="#323130" stroke-width="1.7"/></g><g transform="translate(1845,452)"><path d="M1.5 0V26.5H28" fill="none" stroke="#323130" stroke-width="2"/><path d="M3 3C10 8 18 8 25 3V10C18 14 10 14 3 10Z" fill="#c8c6c4" stroke="#7a7574" stroke-width="1.6"/><path d="M3 12C8 12 10 20 14 20C18 20 20 12 25 12V18C20 18 18 26 14 26C10 26 8 18 3 18Z" fill="#8cbcef" stroke="#2566c4" stroke-width="1.6"/><path d="M3 16H8M11 17H17M20 21H25" stroke="#e8890c" stroke-width="3"/></g><g transform="translate(1635,494)"><path d="M1.5 0V26.5H28" fill="none" stroke="#323130" stroke-width="2"/><rect x="3.5" y="8.5" width="4.5" height="18" fill="#fafafa" stroke="#323130" stroke-width="1.6"/><rect x="8" y="8.5" width="3" height="7" fill="#c8c6c4" stroke="#7a7574" stroke-width="1.6"/><rect x="11" y="2.5" width="4" height="13" fill="#8cbcef" stroke="#2566c4" stroke-width="1.6"/><rect x="15" y="2.5" width="5" height="24" fill="#fafafa" stroke="#323130" stroke-width="1.6"/><path d="M26.5 4V26" stroke="#323130" stroke-width="1.6"/></g><g transform="translate(1677,494)"><rect x="1.5" y="2" width="26" height="5.5" fill="#8cbcef" stroke="#2566c4" stroke-width="1.6"/><rect x="4.5" y="10.5" width="19.5" height="5.5" fill="#8cbcef" stroke="#2566c4" stroke-width="1.6"/><rect x="8.5" y="18.5" width="11.5" height="7.5" fill="#8cbcef" stroke="#2566c4" stroke-width="1.6"/></g><g transform="translate(1719,494)"><path d="M1.5 0V26.5H28" fill="none" stroke="#323130" stroke-width="2"/><rect x="20" y="2" width="5" height="5" fill="#323130"/><rect x="5" y="7" width="5" height="5" fill="#8cbcef"/><rect x="12" y="12" width="5" height="5" fill="#8cbcef"/><rect x="5" y="19" width="5" height="5" fill="#323130"/><rect x="20" y="17" width="5" height="5" fill="#8cbcef"/></g><g transform="translate(1761,494)"><circle cx="14" cy="14" r="13" fill="#fafafa" stroke="#323130" stroke-width="1.6"/><path d="M14 1A13 13 0 0 1 24 23L14 14Z" fill="#8cbcef" stroke="#2566c4" stroke-width="1.6"/></g><g transform="translate(1803,494)"><circle cx="14" cy="14" r="12.5" fill="#fafafa" stroke="#7a7574" stroke-width="1.4"/><path d="M14 1.5A12.5 12.5 0 1 1 1.5 14H7.5A6.5 6.5 0 1 0 14 7.5Z" fill="#8cbcef" stroke="#2566c4" stroke-width="1.6"/><circle cx="14" cy="14" r="6.5" fill="#fafafa" stroke="#7a7574" stroke-width="1.4"/></g><g transform="translate(1845,494)"><rect x="1.5" y="1.5" width="25" height="25" fill="#fafafa" stroke="#323130" stroke-width="1.8"/><rect x="1.5" y="1.5" width="12" height="25" fill="#8cbcef" stroke="#2566c4" stroke-width="1.6"/><path d="M1.5 14H13.5M13.5 10H26.5M19 10V26.5M19 18H26.5" stroke="#323130" stroke-width="1.4"/></g><g transform="translate(1635,536)"><circle cx="11.5" cy="11.5" r="9" fill="#fafafa" stroke="#323130" stroke-width="1.6"/><path d="M5.5 7C7.5 4.5 11 5 11.5 7.5C12 10 9 10.5 8 12.5C7 14.5 8 17 6 17C4 15 3.5 10 5.5 7Z" fill="#3b9c43"/><path d="M13.5 5C16.5 4.5 19.5 7.5 19.5 11C19.5 14 17.5 17.5 14.5 19C13 17 15 15 14 13C13 11 12.5 8 13.5 5Z" fill="#3b9c43"/><path d="M6 1.5A12.5 12.5 0 0 0 8 23.5M11.5 21V26M4 26.5H19" fill="none" stroke="#323130" stroke-width="1.6"/></g><g transform="translate(1677,536)"><path d="M2 3H10L13 6H17V15L11 21L11 26H8L5 22L2 21Z" fill="#c8c6c4" stroke="#323130" stroke-width="1.4"/><path d="M2 2H11L13 5L12 12L2 12Z" fill="#8cbcef" stroke="#2566c4" stroke-width="1.4"/><path d="M14 11H27V21C25 25 20 26 15 25L13 20Z" fill="#8cbcef" stroke="#2566c4" stroke-width="1.4"/><path d="M18 2H27V11H14" fill="#c8c6c4" stroke="#323130" stroke-width="1.4"/></g><g transform="translate(1719,536)"><path d="M17 0.5L3 24.5L16 20L24 29Z" fill="#45a0d6"/><path d="M17 0.5L16 20L24 29Z" fill="#2d7dd2"/><path d="M17 0.5L19 15L16 20Z" fill="#7ec3ea"/></g><g transform="translate(1761,536)"><path d="M1.5 20A12.5 12.5 0 0 1 26.5 20H21A7 7 0 0 0 7 20Z" fill="#fafafa" stroke="#323130" stroke-width="1.6"/><path d="M10 8.5A12.5 12.5 0 0 1 26.5 20H21A7 7 0 0 0 12.5 13.5Z" fill="#8cbcef" stroke="#2566c4" stroke-width="1.6"/><path d="M12.5 20L19 14" stroke="#323130" stroke-width="2.2"/><circle cx="13" cy="19.5" r="2" fill="#323130"/></g><g transform="translate(1803,536)"><rect x="1.5" y="4.5" width="26" height="20" fill="#fafafa" stroke="#323130" stroke-width="1.8"/><text x="14.5" y="17.5" font-size="11" font-family="Liberation Sans" fill="#3a85d0" text-anchor="middle">123</text><path d="M4.5 21H24.5" stroke="#7a7574" stroke-width="1.2"/></g><g transform="translate(1845,536)"><rect x="1.5" y="1.5" width="26" height="26" fill="#fafafa" stroke="#323130" stroke-width="1.8"/><path d="M5 6V23" stroke="#7a7574" stroke-width="1.2"/><path d="M8 7H23M8 17H23" stroke="#2566c4" stroke-width="2"/><path d="M8 12H15M8 21H15" stroke="#7a7574" stroke-width="1.2"/></g><g transform="translate(1635,578)"><rect x="1" y="6" width="27" height="21" fill="#fafafa" stroke="#323130" stroke-width="1.8"/><path d="M5 16L9 10L13 16Z" fill="none" stroke="#3b9c43" stroke-width="1.6"/><path d="M15 10H24L19.5 17Z" fill="#f47e7e" stroke="#d13438" stroke-width="1.4"/><path d="M4 21.5H25" stroke="#7a7574" stroke-width="1.2"/></g><g transform="translate(1677,578)"><rect x="1.5" y="1.5" width="26" height="25" fill="#fafafa" stroke="#323130" stroke-width="1.8"/><rect x="2.5" y="2.5" width="24" height="4" fill="#c8c6c4"/><rect x="6" y="10.5" width="4" height="4" fill="#c8c6c4" stroke="#7a7574" stroke-width="1.2"/><rect x="6" y="17.5" width="4" height="4" fill="#c8c6c4" stroke="#7a7574" stroke-width="1.2"/><path d="M14 15H28L23.5 20V28H18.5V20Z" fill="#fafafa" stroke="#323130" stroke-width="1.6"/></g><g transform="translate(1719,578)"><rect x="1.5" y="1.5" width="26" height="26" fill="#fafafa" stroke="#323130" stroke-width="1.8"/><rect x="2.5" y="2.5" width="24" height="4" fill="#c8c6c4"/><path d="M1.5 7H27.5M1.5 14H27.5M1.5 20.5H27.5M10 7V27M19 7V27" stroke="#7a7574" stroke-width="1.3"/></g><g transform="translate(1761,578)"><rect x="1.5" y="1.5" width="26" height="26" fill="#fafafa" stroke="#323130" stroke-width="1.8"/><rect x="2.5" y="2.5" width="24" height="4" fill="#c8c6c4"/><rect x="2.5" y="20" width="24" height="7" fill="#8cbcef"/><rect x="19" y="7" width="7.5" height="20" fill="#8cbcef"/><path d="M1.5 7H27.5M1.5 14H27.5M1.5 20.5H27.5M10 7V27M19 7V27" stroke="#7a7574" stroke-width="1.3"/></g><g transform="translate(1803,578)"><text x="14" y="23" font-size="25" font-weight="700" font-family="Liberation Sans" fill="#3a85d0" text-anchor="middle">R</text></g><g transform="translate(1845,578)"><text x="13.5" y="20.5" font-size="25" font-weight="700" font-family="Liberation Sans" fill="#3a85d0" text-anchor="middle" letter-spacing="-2">Py</text></g><g transform="translate(1635,620)"><path d="M1.5 0V27H28" fill="none" stroke="#323130" stroke-width="1.8"/><path d="M2 6H20" stroke="#2566c4" stroke-width="1.6"/><circle cx="23" cy="6" r="3" fill="#8cbcef" stroke="#2566c4" stroke-width="1.6"/><path d="M2 12H15M2 18H10" stroke="#7a7574" stroke-width="1.4"/><circle cx="17" cy="12" r="2" fill="none" stroke="#7a7574" stroke-width="1.3"/><circle cx="12" cy="18" r="2" fill="none" stroke="#7a7574" stroke-width="1.3"/></g><g transform="translate(1677,620)"><rect x="1.5" y="11" width="10" height="6" fill="#8cbcef" stroke="#2566c4" stroke-width="1.6"/><rect x="17.5" y="1.5" width="10" height="5.5" fill="#8cbcef" stroke="#2566c4" stroke-width="1.6"/><rect x="17.5" y="10.5" width="10" height="6" fill="#8cbcef" stroke="#2566c4" stroke-width="1.6"/><rect x="17.5" y="20" width="10" height="6" fill="#8cbcef" stroke="#2566c4" stroke-width="1.6"/><path d="M11.5 14H14M14 4V23H17.5M14 4H17.5M14 13.5H17.5" fill="none" stroke="#323130" stroke-width="1.4"/></g><g transform="translate(1719,620)"><path d="M1.5 2.5H27.5V18.5H13L7 26V18.5H1.5Z" fill="#fafafa" stroke="#2566c4" stroke-width="1.6" stroke-linejoin="round"/></g><g transform="translate(1761,620)"><path d="M4 2H19L26 9V28H4Z" fill="#fafafa" stroke="#323130" stroke-width="1.6"/><path d="M19 2V9H26" fill="none" stroke="#323130" stroke-width="1.4"/><circle cx="4" cy="10.5" r="2.5" fill="#8cbcef" stroke="#2566c4" stroke-width="1.4"/><path d="M10 12.5H20M8 17H16" stroke="#3a85d0" stroke-width="1.6"/></g><g transform="translate(1803,620)"><path d="M7.5 3H21V13C21 17 18 19.5 14.2 19.5C10.5 19.5 7.5 17 7.5 13Z" fill="#fafafa" stroke="#323130" stroke-width="1.8"/><path d="M7.5 6H2.5V9C2.5 12 5 14 8 14M21 6H26V9C26 12 23.5 14 20.5 14" fill="none" stroke="#323130" stroke-width="1.8"/><rect x="7.5" y="2" width="13.5" height="3" fill="#8cbcef" stroke="#2566c4" stroke-width="1.4"/><path d="M14.2 19.5V23" stroke="#323130" stroke-width="1.8"/><rect x="7.5" y="23" width="14" height="4.5" rx="2" fill="#8cbcef" stroke="#2566c4" stroke-width="1.4"/></g><g transform="translate(1845,620)"><path d="M2.5 1.5H19L26.5 9V28H2.5Z" fill="#fafafa" stroke="#323130" stroke-width="1.8"/><path d="M19 1.5V9H26.5" fill="none" stroke="#323130" stroke-width="1.4"/><rect x="6.5" y="17" width="3.5" height="8" fill="#323130"/><rect x="13" y="21" width="3.5" height="4" fill="#323130"/><rect x="19.5" y="14" width="3.5" height="11" fill="#323130"/></g><g transform="translate(1635,662)"><rect x="1.5" y="5" width="26" height="21.5" fill="#fafafa" stroke="#323130" stroke-width="1.8"/><text x="15" y="19.5" font-size="11" font-family="Liberation Sans" fill="#3a85d0" text-anchor="middle">123</text><path d="M5 23H25" stroke="#7a7574" stroke-width="1.2"/><path d="M7 0.5H14L10 7H13L3 18L6 9H1.5Z" fill="#f6b73c" stroke="#d86c16" stroke-width="1.2" stroke-linejoin="round"/></g><g transform="translate(1677,662)"><rect x="1.5" y="1.5" width="26" height="25" fill="#fafafa" stroke="#323130" stroke-width="1.8"/><rect x="10" y="2.5" width="16.5" height="4" fill="#c8c6c4"/><rect x="6" y="17.5" width="4" height="4" fill="#c8c6c4" stroke="#7a7574" stroke-width="1.2"/><path d="M14 15H28L23.5 20V28H18.5V20Z" fill="#fafafa" stroke="#323130" stroke-width="1.6"/><path d="M7 0.5H14L10 7H13L3 18L6 9H1.5Z" fill="#f6b73c" stroke="#d86c16" stroke-width="1.2" stroke-linejoin="round"/></g><g transform="translate(1719,662)"><circle cx="14" cy="14" r="13" fill="#e0e0e0" stroke="#b3b0ad" stroke-width="1.4"/><circle cx="14.5" cy="14.5" r="10.5" fill="#3b9c43"/><path d="M6 9C12 6 18 10 24 8L25 18C19 23 11 21 5 22Z" fill="#2d7dd2"/><path d="M3 12C10 8 19 8 26 11M3 18C10 14 19 14 26 17M9 3C6 10 7 19 11 26M18 2C15 10 16 19 20 26" fill="none" stroke="#b3b0ad" stroke-width="1.2"/></g><g transform="translate(1761,662)"><path d="M11.3 1.4L0.6 13.6L11.3 26.2H15.9" fill="none" stroke="#8a2da5" stroke-width="1.6" stroke-linejoin="round"/><path d="M11.3 1.4H15.9L27.7 13.6L15.9 26.2L10.5 20.2L16.3 13.6L10.5 7.2Z" fill="#fafafa" stroke="#8a2da5" stroke-width="1.6" stroke-linejoin="round"/><path d="M16.3 13.6L21.8 7.6M16.3 13.6L21.8 19.6" stroke="#8a2da5" stroke-width="1.6"/></g><g transform="translate(1803,662)"><path d="M0.8 2.9H18.2L27.2 13.2L17.8 24H0.8L9.4 13Z" fill="#fafafa" stroke="#2d7dd2" stroke-width="1.7" stroke-linejoin="round"/><path d="M18.2 2.9L9.4 13M22.7 8.3L10.4 23.6" stroke="#2d7dd2" stroke-width="1.6"/></g><g transform="translate(1845,662)"><circle cx="5" cy="11" r="1.8" fill="#323130"/><circle cx="14" cy="11" r="1.8" fill="#323130"/><circle cx="23" cy="11" r="1.8" fill="#323130"/></g></svg>
<div class="a" style="left:1619px;top:703px;width:270px;height:1.3px;background:#e1dfdd"></div>
<div class="a" style="left:1880.5px;top:707px;width:8.5px;height:426px;background:#d2d0ce;border-radius:4px"></div>
<div class="a" style="top:719.89px;font-size:17.5px;line-height:17.5px;color:#252423;letter-spacing:-0.1px;left:1637px;">X-axis</div>
<div class="a" style="left:1625.5px;top:749.8px;width:254px;height:51px;background:#fff;border:1px dashed #c8c6c4;border-radius:3px"></div>
<div class="a" style="left:1629.4px;top:753.2px;width:246.5px;height:33.2px;background:#edebe9;border:1px solid #c8c6c4;border-radius:3px"></div>
<div class="a" style="top:760.66px;font-size:18px;line-height:18px;color:#252423;left:1636.4px;">r_name</div>
<div class="a" style="top:819.79px;font-size:17.5px;line-height:17.5px;color:#252423;letter-spacing:-0.1px;left:1637px;">Y-axis</div>
<div class="a" style="left:1625.5px;top:849.5px;width:254px;height:51px;background:#fff;border:1px dashed #c8c6c4;border-radius:3px"></div>
<div class="a" style="left:1629.4px;top:853.4px;width:246.5px;height:33.2px;background:#edebe9;border:1px solid #c8c6c4;border-radius:3px"></div>
<div class="a" style="top:860.36px;font-size:18px;line-height:18px;color:#252423;letter-spacing:-0.1px;left:1636.4px;">Sum of o_totalprice</div>
<svg style="left:0px;top:0px;" width="2160" height="1278" viewBox="0 0 2160 1278"><path d="M1831 765.7L1839.2 774.0L1847.4 765.7M1857.5 764.2L1868.5 775.2M1868.5 764.2L1857.5 775.2" fill="none" stroke="#323130" stroke-width="1.5"/></svg>
<svg style="left:0px;top:0px;" width="2160" height="1278" viewBox="0 0 2160 1278"><path d="M1831 865.9L1839.2 874.1999999999999L1847.4 865.9M1857.5 864.4L1868.5 875.4M1868.5 864.4L1857.5 875.4" fill="none" stroke="#323130" stroke-width="1.5"/></svg>
<div class="a" style="top:920.09px;font-size:17.5px;line-height:17.5px;color:#252423;letter-spacing:-0.1px;left:1637px;">Legend</div>
<div class="a" style="left:1625.5px;top:949px;width:254px;height:42px;background:#fff;border:1px dashed #c8c6c4;border-radius:3px"></div>
<div class="a" style="top:959.66px;font-size:18px;line-height:18px;color:#252423;letter-spacing:-0.1px;left:1641.4px;">Add data fields here</div>
<div class="a" style="top:1010.09px;font-size:17.5px;line-height:17.5px;color:#252423;letter-spacing:-0.1px;left:1637px;">Small multiples</div>
<div class="a" style="left:1625.5px;top:1039px;width:254px;height:42px;background:#fff;border:1px dashed #c8c6c4;border-radius:3px"></div>
<div class="a" style="top:1049.76px;font-size:18px;line-height:18px;color:#252423;letter-spacing:-0.1px;left:1641.4px;">Add data fields here</div>
<div class="a" style="top:1100.09px;font-size:17.5px;line-height:17.5px;color:#252423;letter-spacing:-0.1px;left:1637px;">Tooltips</div>
<div class="a" style="left:1625.5px;top:1129px;width:254px;height:42px;background:#fff;border:1px dashed #c8c6c4;border-radius:3px"></div>
<div class="a" style="top:1139.66px;font-size:18px;line-height:18px;color:#252423;letter-spacing:-0.1px;left:1641.4px;">Add data fields here</div>
<div class="a" style="top:1190.09px;font-size:17.5px;line-height:17.5px;color:#605e5c;font-weight:700;letter-spacing:-0.6px;left:1637px;">Drill through</div>
<div class="a" style="left:1641px;top:1228px;width:6px;height:1.5px;background:#605e5c"></div>
<svg style="left:0px;top:0px;" width="2160" height="1278" viewBox="0 0 2160 1278"><path d="M1810.5 1230C1812 1226 1815 1224.5 1820 1224.5H1844C1849 1224.5 1852 1226 1853.5 1230" fill="#fff" stroke="#605e5c" stroke-width="1.3"/></svg>
<div class="a" style="top:257.78px;font-size:24px;line-height:24px;color:#252423;font-weight:700;letter-spacing:-0.8px;left:1903.5px;">Data</div>
<svg style="left:0px;top:0px;" width="2160" height="1278" viewBox="0 0 2160 1278"><path d="M2130.5 260.5L2138.5 269.5L2130.5 278M2139 260.5L2147 269.5L2139 278" fill="none" stroke="#000" stroke-width="1.6"/></svg>
<div class="a" style="left:1896.5px;top:308.4px;width:257px;height:38.3px;border:1px solid #8a8886;border-radius:3px"></div>
<svg style="left:0px;top:0px;" width="2160" height="1278" viewBox="0 0 2160 1278"><circle cx="1922" cy="324" r="7" fill="none" stroke="#323130" stroke-width="1.5"/><path d="M1917 329.2L1908.3 337.8" stroke="#323130" stroke-width="1.6"/></svg>
<div class="a" style="top:320.82px;font-size:19px;line-height:19px;color:#605e5c;letter-spacing:-0.3px;left:1939.75px;">Search</div>
<div class="a" style="top:370.36px;font-size:18px;line-height:18px;color:#252423;letter-spacing:-0.1px;left:1961.4px;">customer</div>
<div class="a" style="top:406.36px;font-size:18px;line-height:18px;color:#252423;letter-spacing:-0.1px;left:1961.4px;">lineitem</div>
<div class="a" style="top:442.36px;font-size:18px;line-height:18px;color:#252423;letter-spacing:-0.1px;left:1961.4px;">nation</div>
<div class="a" style="top:478.36px;font-size:18px;line-height:18px;color:#252423;letter-spacing:-0.1px;left:1961.4px;">orders</div>
<div class="a" style="top:514.36px;font-size:18px;line-height:18px;color:#252423;letter-spacing:-0.1px;left:2013.75px;">o_clerk</div>
<div class="a" style="top:550.36px;font-size:18px;line-height:18px;color:#252423;letter-spacing:-0.1px;left:2013.75px;">o_comment</div>
<div class="a" style="top:586.36px;font-size:18px;line-height:18px;color:#252423;letter-spacing:-0.1px;left:2013.75px;">o_custkey</div>
<div class="a" style="top:622.36px;font-size:18px;line-height:18px;color:#252423;letter-spacing:-0.1px;left:2013.75px;">o_orderdate</div>
<div class="a" style="top:658.36px;font-size:18px;line-height:18px;color:#252423;letter-spacing:-0.1px;left:2013.75px;">o_orderkey</div>
<div class="a" style="top:694.36px;font-size:18px;line-height:18px;color:#252423;letter-spacing:-0.1px;left:2013.75px;">o_orderpriority</div>
<div class="a" style="top:730.36px;font-size:18px;line-height:18px;color:#252423;letter-spacing:-0.1px;left:2013.75px;">o_orderstatus</div>
<div class="a" style="top:766.36px;font-size:18px;line-height:18px;color:#252423;letter-spacing:-0.1px;left:2013.75px;">o_shippriority</div>
<div class="a" style="top:802.36px;font-size:18px;line-height:18px;color:#252423;letter-spacing:-0.1px;left:2013.75px;">o_totalprice</div>
<div class="a" style="top:838.36px;font-size:18px;line-height:18px;color:#252423;letter-spacing:-0.1px;left:1961.4px;">part</div>
<div class="a" style="top:874.36px;font-size:18px;line-height:18px;color:#252423;letter-spacing:-0.1px;left:1961.4px;">partsupp</div>
<div class="a" style="top:910.36px;font-size:18px;line-height:18px;color:#252423;letter-spacing:-0.1px;left:1961.4px;">region</div>
<div class="a" style="top:946.36px;font-size:18px;line-height:18px;color:#252423;letter-spacing:-0.1px;left:2013.75px;">r_comment</div>
<div class="a" style="top:982.36px;font-size:18px;line-height:18px;color:#252423;letter-spacing:-0.1px;left:2013.75px;">r_name</div>
<div class="a" style="top:1018.36px;font-size:18px;line-height:18px;color:#252423;letter-spacing:-0.1px;left:2013.75px;">r_regionkey</div>
<div class="a" style="top:1054.36px;font-size:18px;line-height:18px;color:#252423;letter-spacing:-0.1px;left:1961.4px;">revenue0</div>
<div class="a" style="top:1090.36px;font-size:18px;line-height:18px;color:#252423;letter-spacing:-0.1px;left:1961.4px;">supplier</div>
<svg style="left:0px;top:0px;" width="2160" height="1278" viewBox="0 0 2160 1278"><path d="M1914.5 370.5L1923 379L1914.5 387.5" fill="none" stroke="#323130" stroke-width="1.5"/><rect x="1935" y="370.5" width="17" height="17" rx="3.5" fill="none" stroke="#323130" stroke-width="1.8"/><path d="M1940.7 370.5V387.5M1946.3 370.5V387.5M1935 376.2H1952M1935 381.8H1952" stroke="#323130" stroke-width="1.6"/><path d="M1914.5 406.5L1923 415L1914.5 423.5" fill="none" stroke="#323130" stroke-width="1.5"/><rect x="1935" y="406.5" width="17" height="17" rx="3.5" fill="none" stroke="#323130" stroke-width="1.8"/><path d="M1940.7 406.5V423.5M1946.3 406.5V423.5M1935 412.2H1952M1935 417.8H1952" stroke="#323130" stroke-width="1.6"/><path d="M1914.5 442.5L1923 451L1914.5 459.5" fill="none" stroke="#323130" stroke-width="1.5"/><rect x="1935" y="442.5" width="17" height="17" rx="3.5" fill="none" stroke="#323130" stroke-width="1.8"/><path d="M1940.7 442.5V459.5M1946.3 442.5V459.5M1935 448.2H1952M1935 453.8H1952" stroke="#323130" stroke-width="1.6"/><path d="M1910 482.5L1918.5 491L1927 482.5" fill="none" stroke="#323130" stroke-width="1.5"/><rect x="1935" y="478.5" width="17" height="17" rx="3.5" fill="none" stroke="#323130" stroke-width="1.8"/><path d="M1940.7 478.5V495.5M1946.3 478.5V495.5M1935 484.2H1952M1935 489.8H1952" stroke="#323130" stroke-width="1.6"/><circle cx="1952" cy="496.5" r="8.9" fill="#267868"/><path d="M1948 496.5L1951 499.5L1956 494" fill="none" stroke="#fff" stroke-width="1.8"/><rect x="1956.5" y="514.7" width="17" height="16.5" rx="2" fill="none" stroke="#8a8886" stroke-width="1.2"/><rect x="1956.5" y="550.7" width="17" height="16.5" rx="2" fill="none" stroke="#8a8886" stroke-width="1.2"/><rect x="1956.5" y="586.7" width="17" height="16.5" rx="2" fill="none" stroke="#8a8886" stroke-width="1.2"/><rect x="1956.5" y="622.7" width="17" height="16.5" rx="2" fill="none" stroke="#8a8886" stroke-width="1.2"/><rect x="1956.5" y="658.7" width="17" height="16.5" rx="2" fill="none" stroke="#8a8886" stroke-width="1.2"/><path d="M2002 659.5H1988.5L1996 667L1988.5 674.5H2002" fill="none" stroke="#323130" stroke-width="1.4"/><rect x="1956.5" y="694.7" width="17" height="16.5" rx="2" fill="none" stroke="#8a8886" stroke-width="1.2"/><rect x="1956.5" y="730.7" width="17" height="16.5" rx="2" fill="none" stroke="#8a8886" stroke-width="1.2"/><rect x="1956.5" y="766.7" width="17" height="16.5" rx="2" fill="none" stroke="#8a8886" stroke-width="1.2"/><path d="M2002 767.5H1988.5L1996 775L1988.5 782.5H2002" fill="none" stroke="#323130" stroke-width="1.4"/><rect x="1956" y="802.2" width="18" height="17.5" rx="2" fill="#267868"/><path d="M1960 811L1963.5 814.5L1970 807.5" fill="none" stroke="#fff" stroke-width="1.6"/><path d="M2002 803.5H1988.5L1996 811L1988.5 818.5H2002" fill="none" stroke="#323130" stroke-width="1.4"/><path d="M1914.5 838.5L1923 847L1914.5 855.5" fill="none" stroke="#323130" stroke-width="1.5"/><rect x="1935" y="838.5" width="17" height="17" rx="3.5" fill="none" stroke="#323130" stroke-width="1.8"/><path d="M1940.7 838.5V855.5M1946.3 838.5V855.5M1935 844.2H1952M1935 849.8H1952" stroke="#323130" stroke-width="1.6"/><path d="M1914.5 874.5L1923 883L1914.5 891.5" fill="none" stroke="#323130" stroke-width="1.5"/><rect x="1935" y="874.5" width="17" height="17" rx="3.5" fill="none" stroke="#323130" stroke-width="1.8"/><path d="M1940.7 874.5V891.5M1946.3 874.5V891.5M1935 880.2H1952M1935 885.8H1952" stroke="#323130" stroke-width="1.6"/><path d="M1910 914.5L1918.5 923L1927 914.5" fill="none" stroke="#323130" stroke-width="1.5"/><rect x="1935" y="910.5" width="17" height="17" rx="3.5" fill="none" stroke="#323130" stroke-width="1.8"/><path d="M1940.7 910.5V927.5M1946.3 910.5V927.5M1935 916.2H1952M1935 921.8H1952" stroke="#323130" stroke-width="1.6"/><circle cx="1952" cy="928.5" r="8.9" fill="#267868"/><path d="M1948 928.5L1951 931.5L1956 926" fill="none" stroke="#fff" stroke-width="1.8"/><rect x="1956.5" y="946.7" width="17" height="16.5" rx="2" fill="none" stroke="#8a8886" stroke-width="1.2"/><rect x="1956" y="982.2" width="18" height="17.5" rx="2" fill="#267868"/><path d="M1960 991L1963.5 994.5L1970 987.5" fill="none" stroke="#fff" stroke-width="1.6"/><rect x="1956.5" y="1018.7" width="17" height="16.5" rx="2" fill="none" stroke="#8a8886" stroke-width="1.2"/><path d="M1914.5 1054.5L1923 1063L1914.5 1071.5" fill="none" stroke="#323130" stroke-width="1.5"/><rect x="1935" y="1054.5" width="17" height="17" rx="3.5" fill="none" stroke="#323130" stroke-width="1.8"/><path d="M1940.7 1054.5V1071.5M1946.3 1054.5V1071.5M1935 1060.2H1952M1935 1065.8H1952" stroke="#323130" stroke-width="1.6"/><path d="M1914.5 1090.5L1923 1099L1914.5 1107.5" fill="none" stroke="#323130" stroke-width="1.5"/><rect x="1935" y="1090.5" width="17" height="17" rx="3.5" fill="none" stroke="#323130" stroke-width="1.8"/><path d="M1940.7 1090.5V1107.5M1946.3 1090.5V1107.5M1935 1096.2H1952M1935 1101.8H1952" stroke="#323130" stroke-width="1.6"/></svg>
</body></html>
